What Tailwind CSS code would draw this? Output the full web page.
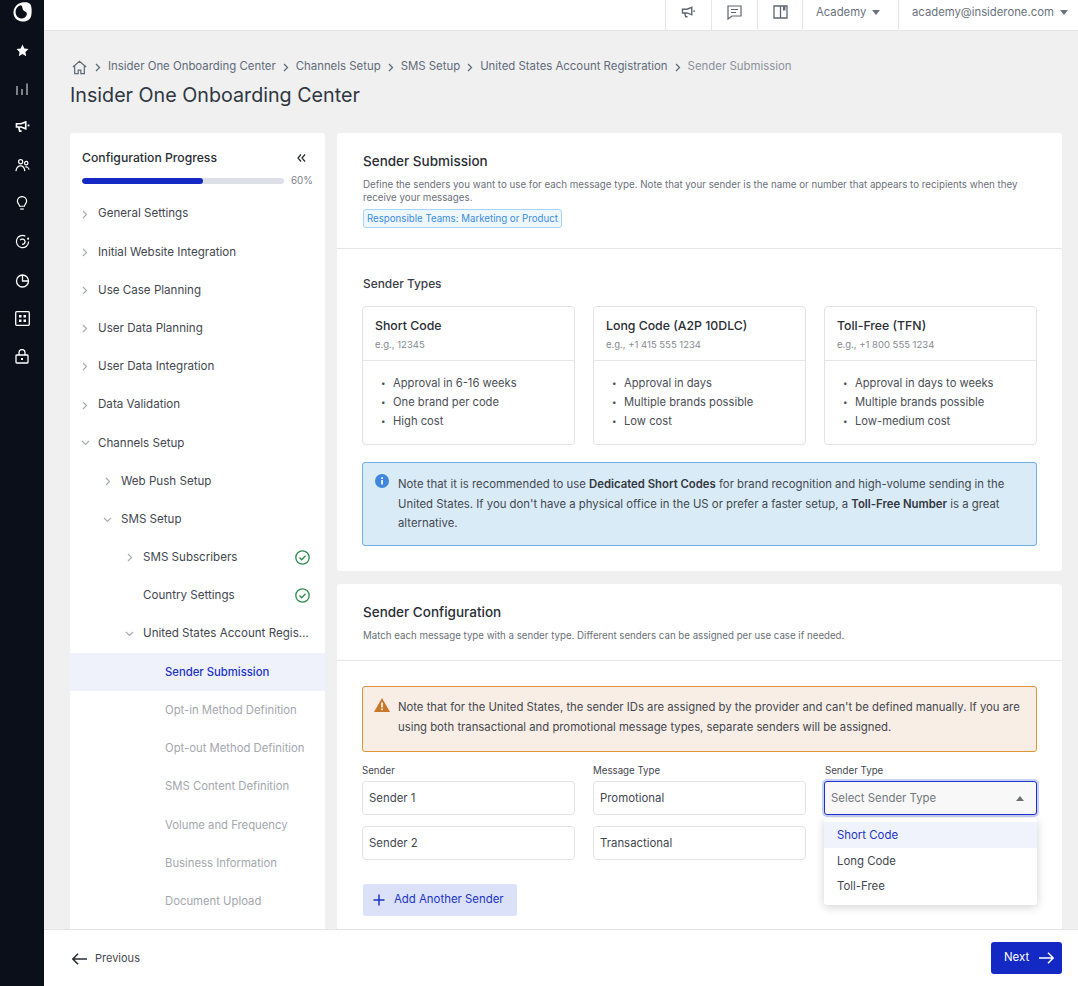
<!DOCTYPE html>
<html lang="en">
<head>
    <meta charset="UTF-8">
    <meta name="viewport" content="width=device-width, initial-scale=1.0">
    <title>Insider One Onboarding Center</title>
    <script src="https://cdn.jsdelivr.net/npm/@tailwindcss/browser@4"></script>
</head>
<body class="h-screen overflow-hidden flex bg-[#f0f0f0] text-[#33373f] font-['Inter','Liberation_Sans',sans-serif]">
    <!-- left rail -->
    <nav class="w-[44px] shrink-0 h-full bg-[#0a0f19] flex flex-col items-center text-white">
        <div class="h-[38.300px] shrink-0 -mt-[7px] flex items-center justify-center">
            <svg class="w-[19px] h-[20px]" viewBox="0 0 19 20"><path d="M9 .5c3-.5 7-.5 8.500 2 1.500 3 1.500 9 .5 12-1 3.500-5 5.500-9 5-4-.5-8-3-8.500-8C.2 6 4 1.200 9 .5z" fill="#fff"/><path d="M8 3.200C5 3.700 2.600 6.500 2.600 10c0 3.500 2.400 6.200 5.400 6.400 2.500.2 5.200-1 5.800-4 .2-1-.2-1.800-.8-2.300-2-.8-3.300-2-3.500-3.800C9.400 5 9.200 4 8 3.200z" fill="#0a0f19"/></svg>
        </div>
        <div class="h-[38.300px] shrink-0 flex items-center justify-center">
            <svg class="w-[13px] h-[13px]" viewBox="0 0 24 24" fill="#fff"><path d="M12 1l3.400 7.200 7.600 1-5.600 5.400 1.400 7.800-6.800-3.800-6.800 3.800 1.400-7.800L1 9.200l7.600-1z"/></svg>
        </div>
        <div class="h-[38.300px] shrink-0 flex items-center justify-center">
            <svg class="w-[12px] h-[12px]" viewBox="0 0 12 12" stroke="#c9ccd2" stroke-width="1.200" fill="none"><path d="M1 3v9M6 6v6M11 .5V12"/></svg>
        </div>
        <div class="h-[38.300px] shrink-0 flex items-center justify-center">
            <svg class="w-[15px] h-[12px]" viewBox="0 0 16 13" fill="none" stroke="#fff" stroke-width="1.800"><path d="M1.500 3h5l5-2v7.500l-5-2h-5zM4 7l1 4h2"/><path d="M14.500 3.800v2" stroke-width="2"/></svg>
        </div>
        <div class="h-[38.300px] shrink-0 flex items-center justify-center">
            <svg class="w-[15px] h-[15px]" viewBox="0 0 16 16" fill="none" stroke="#fff" stroke-width="1.300"><circle cx="6" cy="4" r="2.200"/><circle cx="12" cy="5.500" r="1.800"/><path d="M1 14c.5-3.500 2.500-5.500 5-5.500s4 1.500 4.500 5.500M11 9.500c2-.5 3.500.8 4 3"/></svg>
        </div>
        <div class="h-[38.300px] shrink-0 flex items-center justify-center">
            <svg class="w-[12px] h-[15px]" viewBox="0 0 13 16" fill="none" stroke="#fff" stroke-width="1.300"><path d="M4 11c0-2-2.500-3-2.500-5.500a5 5 0 0 1 10 0C11.500 8 9 9 9 11z"/><path d="M4.500 14h4"/></svg>
        </div>
        <div class="h-[38.300px] shrink-0 flex items-center justify-center">
            <svg class="w-[15px] h-[15px]" viewBox="0 0 16 16" fill="none" stroke="#fff" stroke-width="1.300"><path d="M14.500 8A6.500 6.500 0 1 1 11 2.300"/><path d="M5.500 6.500A3 3 0 0 1 10.800 8c0 2-1.800 3-3.300 3"/><circle cx="14" cy="5" r=".5"/></svg>
        </div>
        <div class="h-[38.300px] shrink-0 flex items-center justify-center">
            <svg class="w-[15px] h-[15px]" viewBox="0 0 15 15" fill="none" stroke="#fff" stroke-width="1.300"><circle cx="7.500" cy="8" r="6"/><path d="M7.500 2v6h6"/></svg>
        </div>
        <div class="h-[38.300px] shrink-0 flex items-center justify-center">
            <svg class="w-[15px] h-[15px]" viewBox="0 0 15 15" fill="none"><rect x=".7" y=".7" width="13.600" height="13.600" rx="1" stroke="#fff" stroke-width="1.300"/><path d="M4 4h2.500v2.500H4zM8.500 4H11v2.500H8.500zM4 8.500h2.500V11H4zM8.500 8.500H11V11H8.500z" fill="#fff"/></svg>
        </div>
        <div class="h-[38.300px] shrink-0 flex items-center justify-center">
            <svg class="w-[14px] h-[15px]" viewBox="0 0 14 15" fill="none" stroke="#fff" stroke-width="1.300"><rect x="1" y="6" width="12" height="8" rx=".8"/><path d="M4 6V3.500a3 3 0 0 1 6 0V6"/><path d="M6 10h2" stroke-width="2"/></svg>
        </div>
    </nav>

    <div class="flex-1 min-w-0 h-full flex flex-col">
        <!-- top bar -->
        <header class="h-[31px] shrink-0 bg-white border-b border-[#e4e6ea] flex justify-end text-[11.300px] text-[#6a7280]">
            <div class="w-[46px] border-l border-[#e4e6ea] flex items-center justify-center pb-[6px]">
                <svg class="w-[15px] h-[13px]" viewBox="0 0 16 14" fill="none" stroke="#5e6673" stroke-width="1.500"><path d="M1.500 3.500h5l5-2v8l-5-2h-5zM4 8l1 3.500h2"/><path d="M14 4.500v2" stroke-width="1.500"/></svg>
            </div>
            <div class="w-[46px] border-l border-[#e4e6ea] flex items-center justify-center pb-[6px]">
                <svg class="w-[15px] h-[15px]" viewBox="0 0 15 15" fill="none" stroke="#5e6673" stroke-width="1.200"><path d="M1 1h13v10H5l-4 3z"/><path d="M4 4.500h7M4 7.500h5"/></svg>
            </div>
            <div class="w-[45px] border-l border-[#e4e6ea] flex items-center justify-center pb-[6px]">
                <svg class="w-[15px] h-[14px]" viewBox="0 0 15 14" fill="none" stroke="#5e6673" stroke-width="1.300"><path d="M1 1h13v12H1zM7.500 1v12"/><path d="M10 1v5l1.200-1 1.200 1V1" fill="#5e6673" stroke="none"/></svg>
            </div>
            <div class="w-[96px] border-l border-[#e4e6ea] flex items-center pl-[13px] gap-[6px] pb-[6px]">
                <span>Academy</span>
                <span class="w-0 h-0 border-x-[4.500px] border-x-transparent border-t-[5px] border-t-[#6a7280]"></span>
            </div>
            <div class="w-[180px] border-l border-[#e4e6ea] flex items-center pl-[13px] gap-[6px] pb-[6px]">
                <span>academy@insiderone.com</span>
                <span class="w-0 h-0 border-x-[4.500px] border-x-transparent border-t-[5px] border-t-[#6a7280]"></span>
            </div>
        </header>

        <!-- scrolling content -->
        <main class="flex-1 min-h-0 overflow-hidden pl-[26px] pr-[16px]">
            <div class="mt-[26px] h-[20px] flex items-center gap-[7px] text-[11.400px] text-[#5f6b7a] whitespace-nowrap ml-[2px]">
                <svg class="w-[15px] h-[15px]" viewBox="0 0 17 16" fill="none" stroke="#5f6b7a" stroke-width="1.400"><path d="M1 7.500L8.500 1 16 7.500M3 6v9h4v-4h3v4h4V6"/></svg>
                <svg class="w-[6px] h-[9px] ml-[1px]" viewBox="0 0 6 9" fill="none" stroke="#5f6b7a" stroke-width="1.300"><path d="M1 1l3.500 3.500L1 8"/></svg>
                <span>Insider One Onboarding Center</span>
                <svg class="w-[6px] h-[9px]" viewBox="0 0 6 9" fill="none" stroke="#5f6b7a" stroke-width="1.300"><path d="M1 1l3.500 3.500L1 8"/></svg>
                <span>Channels Setup</span>
                <svg class="w-[6px] h-[9px]" viewBox="0 0 6 9" fill="none" stroke="#5f6b7a" stroke-width="1.300"><path d="M1 1l3.500 3.500L1 8"/></svg>
                <span>SMS Setup</span>
                <svg class="w-[6px] h-[9px]" viewBox="0 0 6 9" fill="none" stroke="#5f6b7a" stroke-width="1.300"><path d="M1 1l3.500 3.500L1 8"/></svg>
                <span>United States Account Registration</span>
                <svg class="w-[6px] h-[9px]" viewBox="0 0 6 9" fill="none" stroke="#5f6b7a" stroke-width="1.300"><path d="M1 1l3.500 3.500L1 8"/></svg>
                <span class="text-[#8b929c]">Sender Submission</span>
            </div>
            <h1 class="mt-[3px] h-[30px] text-[19.700px] leading-[30px] text-[#2f3742]">Insider One Onboarding Center</h1>

            <div class="mt-[23px] flex gap-[12px] items-start">
                <!-- progress sidebar -->
                <aside class="w-[255px] shrink-0 bg-white rounded-[3px] pb-[40px]">
                    <div class="pl-[12px] pr-[12px] pt-[16px] flex justify-between items-center h-[34px]">
                        <span class="text-[12.200px] font-medium text-[#2a2e35]">Configuration Progress</span>
                        <svg class="w-[9px] h-[8px] mr-[7px]" viewBox="0 0 9 8" fill="none" stroke="#2a2e35" stroke-width="1.300"><path d="M4 .5L1 4l3 3.500M8 .5L5 4l3 3.500"/></svg>
                    </div>
                    <div class="pl-[12px] mt-[7px] h-[14px] flex items-center gap-[7px]">
                        <div class="w-[202px] h-[6px] rounded-full bg-[#dcdfe6] overflow-hidden"><div class="h-full rounded-full bg-[#1428c4]" style="width:60%"></div></div>
                        <span class="text-[9.800px] text-[#7c828c]">60%</span>
                    </div>
                    <ul class="mt-[7px] text-[11.600px] text-[#43474f]">
                        <li class="h-[38.200px] flex items-center pl-[12px]"><svg class="w-[6px] h-[9px] mr-[10px] shrink-0" viewBox="0 0 6 9" fill="none" stroke="#a8acb3" stroke-width="1.200"><path d="M1 1l3.500 3.500L1 8"/></svg>General Settings</li>
                        <li class="h-[38.200px] flex items-center pl-[12px]"><svg class="w-[6px] h-[9px] mr-[10px] shrink-0" viewBox="0 0 6 9" fill="none" stroke="#a8acb3" stroke-width="1.200"><path d="M1 1l3.500 3.500L1 8"/></svg>Initial Website Integration</li>
                        <li class="h-[38.200px] flex items-center pl-[12px]"><svg class="w-[6px] h-[9px] mr-[10px] shrink-0" viewBox="0 0 6 9" fill="none" stroke="#a8acb3" stroke-width="1.200"><path d="M1 1l3.500 3.500L1 8"/></svg>Use Case Planning</li>
                        <li class="h-[38.200px] flex items-center pl-[12px]"><svg class="w-[6px] h-[9px] mr-[10px] shrink-0" viewBox="0 0 6 9" fill="none" stroke="#a8acb3" stroke-width="1.200"><path d="M1 1l3.500 3.500L1 8"/></svg>User Data Planning</li>
                        <li class="h-[38.200px] flex items-center pl-[12px]"><svg class="w-[6px] h-[9px] mr-[10px] shrink-0" viewBox="0 0 6 9" fill="none" stroke="#a8acb3" stroke-width="1.200"><path d="M1 1l3.500 3.500L1 8"/></svg>User Data Integration</li>
                        <li class="h-[38.200px] flex items-center pl-[12px]"><svg class="w-[6px] h-[9px] mr-[10px] shrink-0" viewBox="0 0 6 9" fill="none" stroke="#a8acb3" stroke-width="1.200"><path d="M1 1l3.500 3.500L1 8"/></svg>Data Validation</li>
                        <li class="h-[38.200px] flex items-center pl-[11px]"><svg class="w-[9px] h-[6px] mr-[8px] shrink-0" viewBox="0 0 9 6" fill="none" stroke="#a8acb3" stroke-width="1.200"><path d="M1 1l3.500 3.500L8 1"/></svg>Channels Setup</li>
                        <li class="h-[38.200px] flex items-center pl-[35px]"><svg class="w-[6px] h-[9px] mr-[10px] shrink-0" viewBox="0 0 6 9" fill="none" stroke="#a8acb3" stroke-width="1.200"><path d="M1 1l3.500 3.500L1 8"/></svg>Web Push Setup</li>
                        <li class="h-[38.200px] flex items-center pl-[33px]"><svg class="w-[9px] h-[6px] mr-[9px] shrink-0" viewBox="0 0 9 6" fill="none" stroke="#a8acb3" stroke-width="1.200"><path d="M1 1l3.500 3.500L8 1"/></svg>SMS Setup</li>
                        <li class="h-[38.200px] flex items-center pl-[57px] pr-[15px]"><svg class="w-[6px] h-[9px] mr-[10px] shrink-0" viewBox="0 0 6 9" fill="none" stroke="#a8acb3" stroke-width="1.200"><path d="M1 1l3.500 3.500L1 8"/></svg><span class="flex-1">SMS Subscribers</span><svg class="w-[15px] h-[15px] -mt-[1px]" viewBox="0 0 15 15" fill="none" stroke="#2e8b4f" stroke-width="1.300"><circle cx="7.500" cy="7.500" r="6.700"/><path d="M4.500 7.500l2.200 2.300 3.800-4"/></svg></li>
                        <li class="h-[38.200px] flex items-center pl-[73px] pr-[15px]"><span class="flex-1">Country Settings</span><svg class="w-[15px] h-[15px] -mt-[1px]" viewBox="0 0 15 15" fill="none" stroke="#2e8b4f" stroke-width="1.300"><circle cx="7.500" cy="7.500" r="6.700"/><path d="M4.500 7.500l2.200 2.300 3.800-4"/></svg></li>
                        <li class="h-[38.200px] flex items-center pl-[55px] pr-[15px] whitespace-nowrap"><svg class="w-[9px] h-[6px] mr-[9px] shrink-0" viewBox="0 0 9 6" fill="none" stroke="#a8acb3" stroke-width="1.200"><path d="M1 1l3.500 3.500L8 1"/></svg><span class="truncate">United States Account Registration</span></li>
                        <li class="h-[38.200px] flex items-center pl-[95px] bg-[#f0f2fb] text-[#1c34c8] font-medium text-[11.300px]">Sender Submission</li>
                        <li class="h-[38.200px] flex items-center pl-[95px] text-[#a3a7ae] text-[11.300px]">Opt-in Method Definition</li>
                        <li class="h-[38.200px] flex items-center pl-[95px] text-[#a3a7ae] text-[11.300px]">Opt-out Method Definition</li>
                        <li class="h-[38.200px] flex items-center pl-[95px] text-[#a3a7ae] text-[11.300px]">SMS Content Definition</li>
                        <li class="h-[38.200px] flex items-center pl-[95px] text-[#a3a7ae] text-[11.300px]">Volume and Frequency</li>
                        <li class="h-[38.200px] flex items-center pl-[95px] text-[#a3a7ae] text-[11.300px]">Business Information</li>
                        <li class="h-[38.200px] flex items-center pl-[95px] text-[#a3a7ae] text-[11.300px]">Document Upload</li>
                    </ul>
                </aside>

                <div class="flex-1 min-w-0 flex flex-col gap-[13px]">
                    <!-- sender submission card -->
                    <section class="bg-white rounded-[3px] h-[438px]">
                        <div class="px-[26px] pt-[18px] h-[116px] border-b border-[#e6e6e6]">
                            <h2 class="text-[13.500px] leading-[20px] font-medium text-[#2a2e35]">Sender Submission</h2>
                            <p class="mt-[7px] text-[9.750px] leading-[13px] text-[#6b7079]">Define the senders you want to use for each message type. Note that your sender is the name or number that appears to recipients when they receive your messages.</p>
                            <span class="inline-block mt-[5px] h-[19px] px-[3px] border border-[#a9d3f5] rounded-[3px] bg-[#eff7fe] text-[9.700px] leading-[17px] text-[#3a8ee0]">Responsible Teams: Marketing or Product</span>
                        </div>
                        <div class="px-[25px]">
                            <h3 class="mt-[26px] ml-[1px] text-[11.900px] leading-[18px] font-medium text-[#3a3e46]">Sender Types</h3>
                            <div class="mt-[13px] grid grid-cols-3 gap-[18px]">
                                <div class="h-[139px] border border-[#e2e3e6] rounded-[4px]">
                                    <div class="h-[54px] px-[12px] pt-[10px] border-b border-[#e6e6e6]">
                                        <div class="text-[12.300px] leading-[18px] font-medium text-[#2a2e35]">Short Code</div>
                                        <div class="mt-[3px] text-[9.500px] leading-[14px] text-[#85898f]">e.g., 12345</div>
                                    </div>
                                    <ul class="pt-[13px] pl-[18px] text-[11.200px] leading-[19px] text-[#4a4e56]">
                                        <li class="flex items-center"><span class="w-[12px] text-[8px]">•</span>Approval in 6-16 weeks</li>
                                        <li class="flex items-center"><span class="w-[12px] text-[8px]">•</span>One brand per code</li>
                                        <li class="flex items-center"><span class="w-[12px] text-[8px]">•</span>High cost</li>
                                    </ul>
                                </div>
                                <div class="h-[139px] border border-[#e2e3e6] rounded-[4px]">
                                    <div class="h-[54px] px-[12px] pt-[10px] border-b border-[#e6e6e6]">
                                        <div class="text-[12.300px] leading-[18px] font-medium text-[#2a2e35]">Long Code (A2P 10DLC)</div>
                                        <div class="mt-[3px] text-[9.500px] leading-[14px] text-[#85898f]">e.g., +1 415 555 1234</div>
                                    </div>
                                    <ul class="pt-[13px] pl-[18px] text-[11.200px] leading-[19px] text-[#4a4e56]">
                                        <li class="flex items-center"><span class="w-[12px] text-[8px]">•</span>Approval in days</li>
                                        <li class="flex items-center"><span class="w-[12px] text-[8px]">•</span>Multiple brands possible</li>
                                        <li class="flex items-center"><span class="w-[12px] text-[8px]">•</span>Low cost</li>
                                    </ul>
                                </div>
                                <div class="h-[139px] border border-[#e2e3e6] rounded-[4px]">
                                    <div class="h-[54px] px-[12px] pt-[10px] border-b border-[#e6e6e6]">
                                        <div class="text-[12.300px] leading-[18px] font-medium text-[#2a2e35]">Toll-Free (TFN)</div>
                                        <div class="mt-[3px] text-[9.500px] leading-[14px] text-[#85898f]">e.g., +1 800 555 1234</div>
                                    </div>
                                    <ul class="pt-[13px] pl-[18px] text-[11.200px] leading-[19px] text-[#4a4e56]">
                                        <li class="flex items-center"><span class="w-[12px] text-[8px]">•</span>Approval in days to weeks</li>
                                        <li class="flex items-center"><span class="w-[12px] text-[8px]">•</span>Multiple brands possible</li>
                                        <li class="flex items-center"><span class="w-[12px] text-[8px]">•</span>Low-medium cost</li>
                                    </ul>
                                </div>
                            </div>
                            <div class="mt-[17px] h-[84px] flex gap-[9px] border border-[#6db0ea] rounded-[3px] bg-[#d9ebf7] pl-[12px] pr-[16px] pt-[11px]">
                                <svg class="w-[14px] h-[14px] shrink-0" viewBox="0 0 14 14"><circle cx="7" cy="7" r="7" fill="#3f86dc"/><rect x="6.200" y="6" width="1.700" height="4.500" fill="#fff"/><rect x="6.200" y="3.300" width="1.700" height="1.700" fill="#fff"/></svg>
                                <p class="mt-[1px] text-[11.350px] leading-[19.500px] text-[#43474f]">Note that it is recommended to use <b class="font-semibold text-[#33373f]">Dedicated Short Codes</b> for brand recognition and high-volume sending in the United States. If you don't have a physical office in the US or prefer a faster setup, a <b class="font-semibold text-[#33373f]">Toll-Free Number</b> is a great alternative.</p>
                            </div>
                        </div>
                    </section>

                    <!-- sender configuration card -->
                    <section class="bg-white rounded-[3px] h-[400px]">
                        <div class="px-[26px] pt-[18px] h-[77px] border-b border-[#e6e6e6]">
                            <h2 class="text-[13.500px] leading-[20px] font-medium text-[#2a2e35]">Sender Configuration</h2>
                            <p class="mt-[7px] text-[9.700px] leading-[14px] text-[#6b7079]">Match each message type with a sender type. Different senders can be assigned per use case if needed.</p>
                        </div>
                        <div class="px-[25px] pt-[25px]">
                            <div class="h-[66px] flex gap-[8px] border border-[#e0953a] rounded-[3px] bg-[#f9eee5] pl-[11px] pr-[12px] pt-[11px]">
                                <svg class="w-[16px] h-[14px] shrink-0" viewBox="0 0 16 14"><path d="M8 0l8 14H0z" fill="#c9772b"/><rect x="7.200" y="4.500" width="1.600" height="5" fill="#fff"/><rect x="7.200" y="10.500" width="1.600" height="1.700" fill="#fff"/></svg>
                                <p class="text-[11.300px] leading-[19.500px] text-[#43474f]">Note that for the United States, the sender IDs are assigned by the provider and can't be defined manually. If you are using both transactional and promotional message types, separate senders will be assigned.</p>
                            </div>
                            <div class="mt-[11px] grid grid-cols-3 gap-x-[18px] text-[11.400px] text-[#43474f]">
                                <label class="text-[9.700px] leading-[14px] pt-[1px]">Sender</label>
                                <label class="text-[9.700px] leading-[14px] pt-[1px]">Message Type</label>
                                <label class="text-[9.700px] leading-[14px] pt-[1px] ml-[1px]">Sender Type</label>
                                <div class="mt-[3px] h-[34px] border border-[#e2e3e6] rounded-[4px] flex items-center pl-[6px] pt-[1px]">Sender 1</div>
                                <div class="mt-[3px] h-[34px] border border-[#e2e3e6] rounded-[4px] flex items-center pl-[6px] pt-[1px]">Promotional</div>
                                <div class="relative mt-[3px] h-[34px]">
                                    <div class="h-full border border-[#1c34c8] rounded-[3px] ring-2 ring-[#c7d0f5] bg-[#f8f8f8] flex items-center justify-between pl-[6px] pr-[12px] pt-[1px] text-[#73777e]">
                                        <span>Select Sender Type</span>
                                        <span class="w-0 h-0 border-x-[4.500px] border-x-transparent border-b-[5px] border-b-[#6a6e75]"></span>
                                    </div>
                                    <ul class="absolute left-0 right-0 top-[37px] h-[87px] bg-white rounded-[3px] shadow-[0_2px_10px_rgba(0,0,0,0.18)] pt-[4px] z-10">
                                        <li class="h-[26px] pl-[13px] pt-[1px] flex items-center bg-[#f0f3fc] text-[#1c34c8]">Short Code</li>
                                        <li class="h-[25.500px] pl-[13px] pt-[1px] flex items-center">Long Code</li>
                                        <li class="h-[25.500px] pl-[13px] pt-[1px] flex items-center">Toll-Free</li>
                                    </ul>
                                </div>
                                <div class="mt-[11px] h-[34px] border border-[#e2e3e6] rounded-[4px] flex items-center pl-[6px] pt-[1px]">Sender 2</div>
                                <div class="mt-[11px] h-[34px] border border-[#e2e3e6] rounded-[4px] flex items-center pl-[6px] pt-[1px]">Transactional</div>
                                <div></div>
                            </div>
                            <button class="mt-[24px] ml-[1px] h-[32px] w-[154px] rounded-[3px] bg-[#dbe1f8] text-[#1c34c8] text-[11.400px] flex items-center pl-[10px] gap-[9px]">
                                <svg class="w-[12px] h-[12px]" viewBox="0 0 12 12" stroke="#1c34c8" stroke-width="1.500"><path d="M6 .5v11M.5 6h11"/></svg>
                                Add Another Sender
                            </button>
                        </div>
                    </section>
                </div>
            </div>
        </main>

        <!-- footer -->
        <footer class="h-[57px] shrink-0 bg-white border-t border-[#e4e4e4] flex items-center justify-between pl-[28px] pr-[16px] z-20">
            <button class="flex items-center gap-[8px] text-[11px] text-[#43474f] pt-[1px]">
                <svg class="w-[15px] h-[12px]" viewBox="0 0 15 12" fill="none" stroke="#2a2e35" stroke-width="1.500"><path d="M6 .8L.9 6 6 11.200M1 6h14"/></svg>
                Previous
            </button>
            <button class="w-[71px] h-[32px] rounded-[3px] bg-[#1428c4] text-white text-[11.400px] flex items-center pl-[13px] gap-[10px]">
                Next
                <svg class="w-[15px] h-[12px]" viewBox="0 0 15 12" fill="none" stroke="#fff" stroke-width="1.500"><path d="M9 .8L14.100 6 9 11.200M14 6H0"/></svg>
            </button>
        </footer>
    </div>
</body>
</html>
